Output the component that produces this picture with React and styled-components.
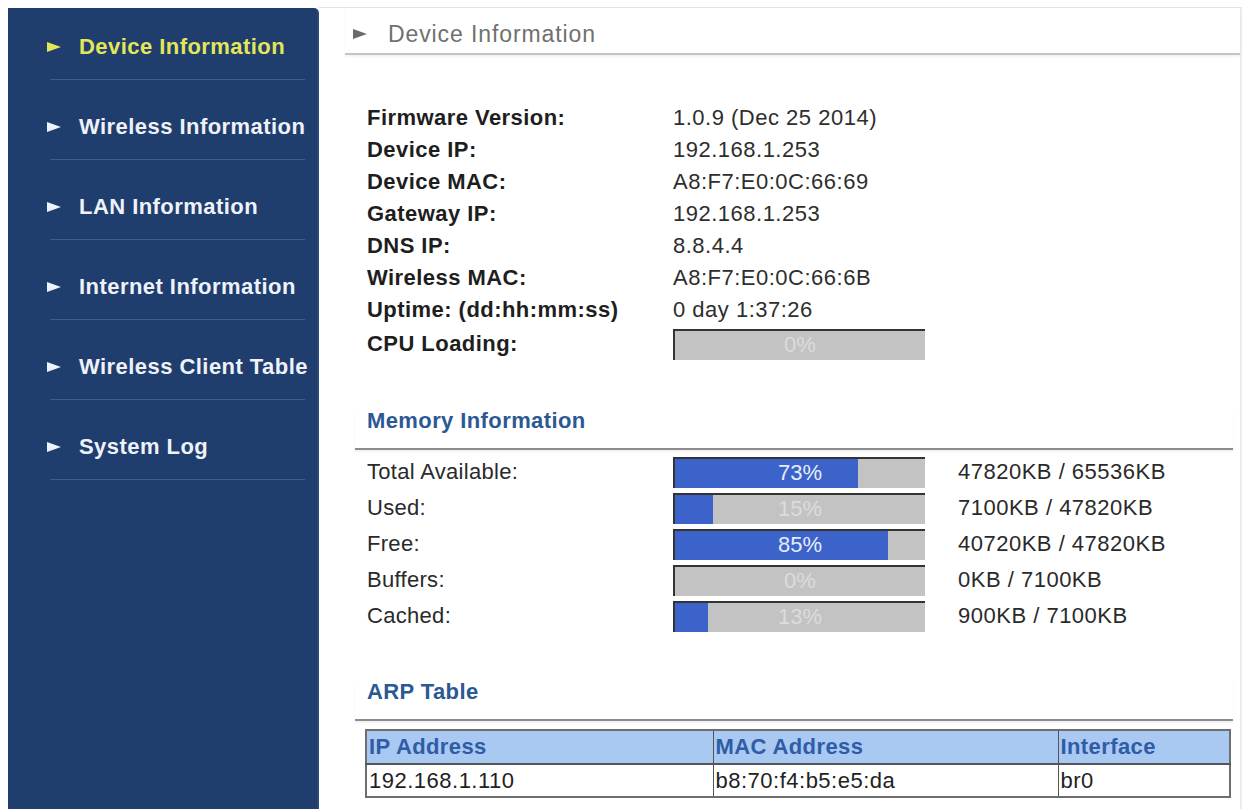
import React from 'react';
import styled, { createGlobalStyle } from "styled-components";

const navItems = [
    'Device Information',
    'Wireless Information',
    'LAN Information',
    'Internet Information',
    'Wireless Client Table',
    'System Log',
];

const deviceInfo = [
    ['Firmware Version:', '1.0.9 (Dec 25 2014)'],
    ['Device IP:', '192.168.1.253'],
    ['Device MAC:', 'A8:F7:E0:0C:66:69'],
    ['Gateway IP:', '192.168.1.253'],
    ['DNS IP:', '8.8.4.4'],
    ['Wireless MAC:', 'A8:F7:E0:0C:66:6B'],
    ['Uptime: (dd:hh:mm:ss)', '0 day 1:37:26'],
];

const memory = [
    ['Total Available:', 73, '47820KB / 65536KB'],
    ['Used:', 15, '7100KB / 47820KB'],
    ['Free:', 85, '40720KB / 47820KB'],
    ['Buffers:', 0, '0KB / 7100KB'],
    ['Cached:', 13, '900KB / 7100KB'],
];

function Meter({ value }) {
    return (
        <Bar>
            <Fill style={{ width: `${value}%` }} />
            <BarText $bright={value > 50}>{value}%</BarText>
        </Bar>
    );
}

function App() {
    return (
        <Page>
            <GlobalStyle />
            <Sidebar>
                {navItems.map((item, i) => (
                    <NavItem key={item} $first={i === 0}>
                        <NavLink $active={i === 0}>
                            <Arrow $color={i === 0 ? '#e4e65a' : '#eef2fa'} />
                            {item}
                        </NavLink>
                    </NavItem>
                ))}
            </Sidebar>

            <Main>
                <Header>
                    <Arrow $color="#6a6a6a" />
                    Device Information
                </Header>

                <Content>
                    <InfoList>
                        {deviceInfo.map(([label, value]) => (
                            <InfoRow key={label}>
                                <Label>{label}</Label>
                                <Value>{value}</Value>
                            </InfoRow>
                        ))}
                        <InfoRow $tall>
                            <Label>CPU Loading:</Label>
                            <Meter value={0} />
                        </InfoRow>
                    </InfoList>

                    <SectionTitle>Memory Information</SectionTitle>
                    <MemoryList>
                        {memory.map(([label, pct, amount]) => (
                            <MemoryRow key={label}>
                                <MemLabel>{label}</MemLabel>
                                <Meter value={pct} />
                                <Amount>{amount}</Amount>
                            </MemoryRow>
                        ))}
                    </MemoryList>

                    <SectionTitle $arp>ARP Table</SectionTitle>
                    <ArpTable>
                        <colgroup>
                            <col style={{ width: 347 }} />
                            <col style={{ width: 345 }} />
                            <col />
                        </colgroup>
                        <thead>
                            <tr>
                                <Th>IP Address</Th>
                                <Th>MAC Address</Th>
                                <Th>Interface</Th>
                            </tr>
                        </thead>
                        <tbody>
                            <tr>
                                <Td>192.168.1.110</Td>
                                <Td>b8:70:f4:b5:e5:da</Td>
                                <Td>br0</Td>
                            </tr>
                        </tbody>
                    </ArpTable>
                </Content>
            </Main>
        </Page>
    );
}

export default App;

const GlobalStyle = createGlobalStyle`
    body {
        margin: 0;
        background: #fff;
        font-family: "Liberation Sans", Arial, sans-serif;
        overflow: hidden;
    }
`;

const Page = styled.div`
    display: flex;
    align-items: flex-start;
    padding: 7px 0 0 8px;
    height: 809px;
    box-sizing: border-box;
`;

const Sidebar = styled.nav`
    width: 311px;
    height: 802px;
    margin-top: 1px;
    background: #203e6d;
    border-top-right-radius: 5px;
    border-right: 2px solid #2a4a7c;
    box-sizing: border-box;
    flex-shrink: 0;
`;

const NavItem = styled.div`
    height: ${p => (p.$first ? 72 : 80)}px;
    display: flex;
    flex-direction: column;
    justify-content: flex-end;

    &::after {
        content: '';
        height: 1px;
        margin: 0 12px 0 42px;
        background: #3c5d92;
    }
`;

const NavLink = styled.div`
    display: flex;
    align-items: center;
    gap: 18px;
    margin: 0 0 20px 39px;
    line-height: 24px;
    font-size: 22px;
    font-weight: bold;
    letter-spacing: 0.45px;
    color: ${p => (p.$active ? '#e4e65a' : '#eef2fa')};
    white-space: nowrap;
`;

const Arrow = styled.span`
    width: 0;
    height: 0;
    border-top: 5px solid transparent;
    border-bottom: 5px solid transparent;
    border-left: 14px solid ${p => p.$color};
    flex-shrink: 0;
`;

const Main = styled.main`
    flex: 1;
    height: 802px;
    border-top: 1px solid #e2e2e2;
    border-right: 2px solid #ececec;
    margin-right: 1px;
`;

const Header = styled.div`
    display: flex;
    align-items: center;
    gap: 21px;
    height: 38px;
    margin-left: 26px;
    padding: 7px 0 0 8px;
    box-sizing: content-box;
    border-bottom: 2px solid #c4c4c4;
    box-shadow: 0 2px 2px rgba(0, 0, 0, 0.05);
    font-size: 23px;
    letter-spacing: 0.9px;
    color: #707070;
`;

const Content = styled.div`
    padding: 47px 7px 0 36px;
`;

const InfoList = styled.div`
    padding-left: 12px;
`;

const InfoRow = styled.div`
    display: grid;
    grid-template-columns: 306px 252px;
    align-items: center;
    height: ${p => (p.$tall ? 36 : 32)}px;
`;

const Label = styled.span`
    font-size: 22px;
    font-weight: bold;
    letter-spacing: 0.45px;
    color: #1e1e1e;
`;

const Value = styled.span`
    font-size: 22px;
    letter-spacing: 0.5px;
    color: #2e2e2e;
`;

const Bar = styled.div`
    position: relative;
    height: 31px;
    background: #c3c3c3;
    border-top: 2px solid #333;
    border-left: 2px solid #333;
    box-sizing: border-box;
    overflow: hidden;
`;

const Fill = styled.div`
    height: 100%;
    background: #3b63c9;
`;

const BarText = styled.span`
    position: absolute;
    inset: 0;
    display: flex;
    align-items: center;
    justify-content: center;
    font-size: 22px;
    color: ${p => (p.$bright ? '#e6ecfa' : '#dcdcdc')};
`;

const SectionTitle = styled.h2`
    margin: ${p => (p.$arp ? 46 : 47)}px 0 0;
    padding: 0 0 15px 12px;
    line-height: 24px;
    font-size: 22px;
    font-weight: bold;
    letter-spacing: 0.4px;
    color: #2c5894;
    border-bottom: 2px solid #8c8c8c;
    box-shadow: 0 2px 2px rgba(0, 0, 0, 0.06);
`;

const MemoryList = styled.div`
    padding: 4px 0 0 12px;
`;

const MemoryRow = styled.div`
    display: grid;
    grid-template-columns: 306px 252px auto;
    align-items: center;
    height: 36px;
`;

const MemLabel = styled.span`
    font-size: 22px;
    letter-spacing: 0.3px;
    color: #2a2a2a;
`;

const Amount = styled.span`
    padding-left: 33px;
    font-size: 22px;
    letter-spacing: 0.5px;
    color: #2a2a2a;
`;

const ArpTable = styled.table`
    width: 866px;
    margin: 8px 0 0 10px;
    table-layout: fixed;
    border-collapse: collapse;
    border: 2px solid #6e6e6e;
    font-size: 22px;
`;

const Th = styled.th`
    height: 32px;
    padding: 0 2px;
    text-align: left;
    font-weight: bold;
    letter-spacing: 0.4px;
    color: #2f5ca6;
    background: #a9c8f2;
    border: 1px solid #555;
    border-bottom: 2px solid #555;
    white-space: nowrap;
    overflow: hidden;
`;

const Td = styled.td`
    height: 31px;
    padding: 0 2px;
    letter-spacing: 0.5px;
    color: #222;
    border: 1px solid #555;
`;
